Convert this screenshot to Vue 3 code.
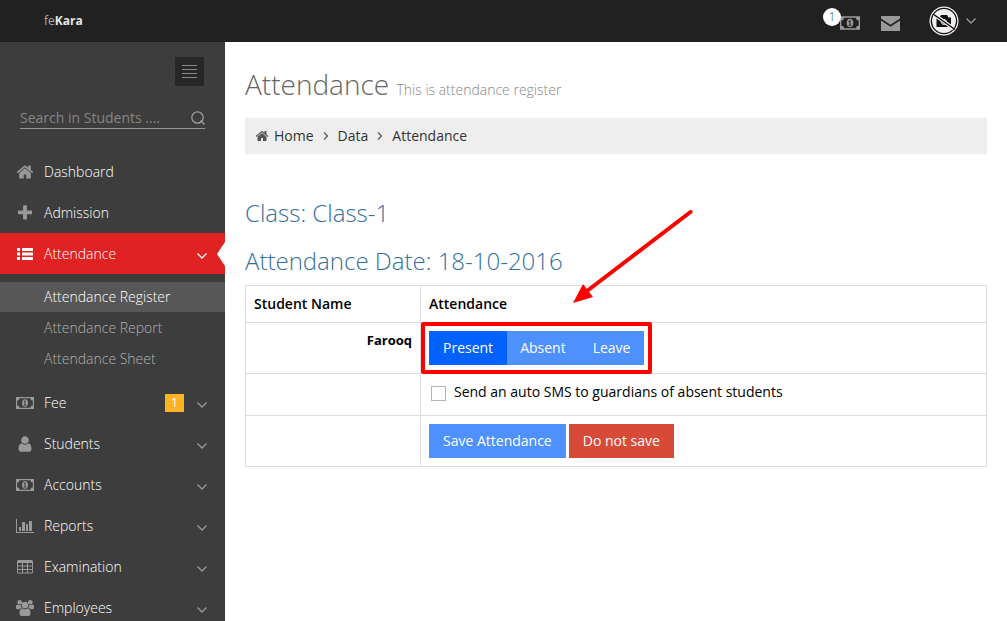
<script setup>
import { ref } from 'vue'

const search = ref('')
const status = ref('Present')
const statuses = ['Present', 'Absent', 'Leave']
const sendSms = ref(false)

const subItems = ['Attendance Register', 'Attendance Report', 'Attendance Sheet']
const items = [
  { label: 'Dashboard', icon: 'home' },
  { label: 'Admission', icon: 'plus' },
  { label: 'Attendance', icon: 'list', arrow: true, active: true },
  { label: 'Fee', icon: 'money', arrow: true, badge: '1' },
  { label: 'Students', icon: 'user', arrow: true },
  { label: 'Accounts', icon: 'money', arrow: true },
  { label: 'Reports', icon: 'chart', arrow: true },
  { label: 'Examination', icon: 'table', arrow: true },
  { label: 'Employees', icon: 'users', arrow: true }
]
</script>

<template>
  <svg class="defs" aria-hidden="true">
    <symbol id="home" viewBox="0 0 1792 1792">
      <path d="M1472 992v480q0 26-19 45t-45 19h-384v-384h-256v384h-384q-26 0-45-19t-19-45v-480q0-1 .5-3t.5-3l575-474 575 474q1 2 1 6zm223-69l-62 74q-8 9-21 11h-3q-13 0-21-7l-692-577-692 577q-12 8-24 7-13-2-21-11l-62-74q-8-10-7-23.5t11-21.5l719-599q32-26 76-26t76 26l244 204v-195q0-14 9-23t23-9h192q14 0 23 9t9 23v408l219 182q10 8 11 21.5t-7 23.5z" />
    </symbol>
    <symbol id="plus" viewBox="0 0 1792 1792">
      <path d="M1600 736v192q0 40-28 68t-68 28h-416v416q0 40-28 68t-68 28h-192q-40 0-68-28t-28-68v-416h-416q-40 0-68-28t-28-68v-192q0-40 28-68t68-28h416v-416q0-40 28-68t68-28h192q40 0 68 28t28 68v416h416q40 0 68 28t28 68z" />
    </symbol>
    <symbol id="list" viewBox="0 0 18 18">
      <path d="M1 3h3v3H1zM6 3h11v3H6zM1 7.500h3v3H1zM6 7.500h11v3H6zM1 12h3v3H1zM6 12h11v3H6z" />
    </symbol>
    <symbol id="money" viewBox="0 0 18 18">
      <path fill-rule="evenodd" d="M0 3h18v12H0zM3.600 4.200A2.400 2.400 0 0 1 1.200 6.600v4.800a2.400 2.400 0 0 1 2.400 2.400h10.800a2.400 2.400 0 0 1 2.400-2.400V6.600a2.400 2.400 0 0 1-2.400-2.400z" />
      <path fill-rule="evenodd" d="M9 5.200c2 0 3 1.800 3 3.800s-1 3.800-3 3.800-3-1.800-3-3.800 1-3.800 3-3.800zM8.700 6.600L7.500 7.700l.6.6.5-.4v2.600h-.9v.9h2.600v-.9h-.8V6.600z" />
    </symbol>
    <symbol id="user" viewBox="0 0 1792 1792">
      <path d="M1536 1399q0 109-62.500 187t-150.500 78h-854q-88 0-150.500-78t-62.500-187q0-85 8.500-160.500t31.500-152 58.500-131 94-89 134.500-34.500q131 128 313 128t313-128q76 0 134.500 34.500t94 89 58.500 131 31.500 152 8.500 160.500zm-256-887q0 159-112.500 271.500t-271.500 112.500-271.500-112.500-112.500-271.500 112.500-271.500 271.500-112.500 271.500 112.500 112.500 271.500z" />
    </symbol>
    <symbol id="chart" viewBox="0 0 18 18">
      <path d="M0 2h1v13h17v1H0zM3 10h2v4H3zM6 5h3v9H6zM10 7h2v7h-2zM13 4h3v10h-3z" />
    </symbol>
    <symbol id="table" viewBox="0 0 18 18">
      <path fill-rule="evenodd" d="M2.500 2h13Q17 2 17 3.500V14q0 1.500-1.500 1.500h-13Q1 15.500 1 14V3.500Q1 2 2.500 2zM2 5v2.500h4V5zM7 5v2.500h4V5zM12 5v2.500h4V5zM2 8.500V11h4V8.500zM7 8.500V11h4V8.500zM12 8.500V11h4V8.500zM2 12v2.500h4V12zM7 12v2.500h4V12zM12 12v2.500h4V12z" />
    </symbol>
    <symbol id="users" viewBox="0 0 18 18">
      <circle cx="3.700" cy="3.300" r="2.300" />
      <circle cx="14.300" cy="3.300" r="2.300" />
      <circle cx="9" cy="6" r="3.300" />
      <path d="M0 9V7.500Q0 5.500 1.500 5.500q2 1.200 3.500.6-.2 1.900.9 3-1.600 0-2.500 1.100H1.500Q0 10.200 0 9zM18 9V7.500q0-2-1.500-2-2 1.200-3.500.6.200 1.900-.9 3 1.600 0 2.500 1.100h1.900q1.500 0 1.500-1.200zM3.500 14.500q0-5 2.800-5.200Q9 11.400 11.700 9.300q2.800.2 2.800 5.200 0 2.500-2.200 2.500H5.700q-2.200 0-2.200-2.500z" />
    </symbol>
    <symbol id="down" viewBox="0 0 12 12">
      <path d="M1.500 3.500L6 8l4.500-4.500" fill="none" stroke="currentColor" stroke-width="1.300" />
    </symbol>
    <symbol id="right" viewBox="0 0 12 12">
      <path d="M4 2.500L7.500 6 4 9.500" fill="none" stroke="currentColor" stroke-width="1.200" />
    </symbol>
  </svg>

  <div class="page">
    <header class="topbar">
      <a href="#" class="logo">fe<b>Kara</b></a>
      <nav class="tools" aria-label="Account">
        <a href="#" class="tool" aria-label="Fees">
          <svg class="cash"><use href="#money" /></svg>
          <span class="count">1</span>
        </a>
        <a href="#" class="tool" aria-label="Messages">
          <svg class="mail" viewBox="0 0 19 15">
            <path d="M0 0h19v2.500L9.500 8.800 0 2.500zM0 4.500l9.500 6.300L19 4.500V15H0z" />
          </svg>
        </a>
        <button type="button" class="profile" aria-label="Profile">
          <svg class="avatar" viewBox="0 0 30 30">
            <circle cx="15" cy="15" r="14.500" fill="#eee" />
            <circle cx="15" cy="15" r="12.600" fill="#f4f0f0" stroke="#111" stroke-width="1.300" />
            <path d="M7.500 11.500h3l1.500-2.500h6l1.500 2.500H22v9.500H7.500z" fill="#111" />
            <circle cx="15" cy="16" r="2.600" fill="#333" stroke="#ccc" />
            <path d="M5 8.500L24.500 22.500" stroke="#f4f0f0" stroke-width="3.600" />
            <path d="M4 8L26 23.500" stroke="#111" stroke-width="1.500" />
          </svg>
          <svg class="chev"><use href="#down" /></svg>
        </button>
      </nav>
    </header>

    <div class="body">
      <aside class="sidebar">
        <button type="button" class="toggler" aria-label="Toggle menu">
          <svg viewBox="0 0 15 13"><path d="M0 .5h15M0 4.500h15M0 8.500h15M0 12.500h15" stroke="#8a8a8a" /></svg>
        </button>
        <form class="search" @submit.prevent>
          <input v-model="search" type="text" placeholder="Search in Students ...." aria-label="Search in Students" />
          <button type="submit" aria-label="Search">
            <svg viewBox="0 0 14 14" stroke="#a0a0a0" stroke-width="1.200">
              <circle cx="6.500" cy="6.500" r="5.700" /><path d="M9.500 9.500l4 4" />
            </svg>
          </button>
        </form>
        <ul class="menu">
          <li v-for="item in items" :key="item.label">
            <a href="#" class="item" :class="{ active: item.active }">
              <svg class="ico"><use :href="'#' + item.icon" /></svg>
              <span class="label">{{ item.label }}</span>
              <span v-if="item.badge" class="badge">{{ item.badge }}</span>
              <svg v-if="item.arrow" class="chev"><use href="#down" /></svg>
            </a>
            <ul v-if="item.active" class="sub">
              <li v-for="(s, i) in subItems" :key="s">
                <a href="#" :class="{ current: i === 0 }">{{ s }}</a>
              </li>
            </ul>
          </li>
        </ul>
      </aside>

      <main class="content">
        <h1>Attendance <small>This is attendance register</small></h1>
        <nav class="crumbs" aria-label="Breadcrumb">
          <svg class="house"><use href="#home" /></svg>
          <a href="#">Home</a>
          <svg class="sep"><use href="#right" /></svg>
          <a href="#">Data</a>
          <svg class="sep"><use href="#right" /></svg>
          <a href="#">Attendance</a>
        </nav>
        <h2>Class: Class-1</h2>
        <h2>Attendance Date: 18-10-2016</h2>
        <table>
          <thead>
            <tr><th scope="col" class="name">Student Name</th><th scope="col">Attendance</th></tr>
          </thead>
          <tbody>
            <tr>
              <th scope="row" class="student">Farooq</th>
              <td>
                <div class="group">
                  <button
                    v-for="s in statuses"
                    :key="s"
                    type="button"
                    class="btn blue"
                    :class="{ on: status === s }"
                    :aria-pressed="status === s"
                    @click="status = s"
                  >{{ s }}</button>
                  <span class="frame"></span>
                  <svg class="arrow" viewBox="0 0 120 94">
                    <path d="M117.500 2L14 81" stroke="#f00" stroke-width="4" stroke-linecap="round" />
                    <path d="M0 93L10 74l10 13z" fill="#f00" />
                  </svg>
                </div>
              </td>
            </tr>
            <tr>
              <td></td>
              <td class="sms">
                <label><input v-model="sendSms" type="checkbox" />Send an auto SMS to guardians of absent students</label>
              </td>
            </tr>
            <tr>
              <td></td>
              <td>
                <div class="actions">
                  <button type="button" class="btn blue">Save Attendance</button>
                  <button type="button" class="btn red">Do not save</button>
                </div>
              </td>
            </tr>
          </tbody>
        </table>
      </main>
    </div>
  </div>
</template>

<style>
body {
  margin: 0;
  background: #fff;
}
</style>

<style scoped>
.defs {
  position: absolute;
  width: 0;
  height: 0;
}
.page {
  display: flex;
  flex-direction: column;
  height: 100vh;
  overflow: hidden;
  font: 14px/20px "Open Sans", sans-serif;
  color: #000;
}
.page * {
  box-sizing: border-box;
}
a {
  color: inherit;
  text-decoration: none;
}
button {
  font: inherit;
  border: 0;
  padding: 0;
  background: none;
  cursor: pointer;
}
ul {
  list-style: none;
  margin: 0;
  padding: 0;
}
svg {
  display: block;
  fill: currentColor;
  flex: none;
}
.topbar {
  display: flex;
  justify-content: space-between;
  align-items: center;
  flex: none;
  height: 42px;
  padding: 0 30px 0 44px;
  background: #212121;
  color: #999;
}
.logo {
  font-size: 12px;
  color: #aaa;
}
.logo b {
  color: #e6e6e6;
}
.tools {
  display: flex;
  align-items: center;
}
.tool {
  position: relative;
  margin-right: 21px;
  padding-top: 4px;
}
.tool + .profile {
  margin-left: 8px;
}
.cash {
  width: 20px;
  height: 20px;
}
.mail {
  width: 19px;
  height: 15px;
}
.count {
  position: absolute;
  left: -17px;
  top: -1px;
  width: 18px;
  height: 18px;
  border-radius: 9px;
  background: #fff;
  color: #6b96d2;
  font-size: 12px;
  line-height: 18px;
  text-align: center;
}
.profile {
  display: flex;
  align-items: center;
  gap: 6px;
  color: #999;
}
.avatar {
  width: 30px;
  height: 30px;
}
.chev {
  width: 12px;
  height: 12px;
}
.body {
  display: flex;
  flex: 1;
  min-height: 0;
}
.sidebar {
  display: flex;
  flex-direction: column;
  flex: none;
  width: 225px;
  overflow: hidden;
  background: #3d3d3d;
}
.toggler {
  display: flex;
  align-items: center;
  justify-content: center;
  align-self: flex-end;
  flex: none;
  width: 29px;
  height: 29px;
  margin: 15px 21px 0 0;
  background: #272727;
}
.toggler svg {
  width: 15px;
  height: 13px;
}
.search {
  display: flex;
  align-items: center;
  flex: none;
  height: 22px;
  margin: 21px 20px 22px;
  border-bottom: 1px solid #959595;
}
.search input {
  flex: 1;
  min-width: 0;
  padding: 0;
  border: 0;
  outline: 0;
  background: none;
  color: #ccc;
  font: 14px/20px "Open Sans", sans-serif;
}
.search input::placeholder {
  color: #858585;
  opacity: 1;
}
.search svg {
  width: 14px;
  height: 14px;
  fill: none;
}
.item {
  position: relative;
  display: flex;
  align-items: center;
  height: 41px;
  padding: 0 17px 0 16px;
  color: #999;
}
.ico {
  width: 18px;
  height: 18px;
  margin-right: 10px;
}
.label {
  flex: 1;
  color: #fff;
  font-weight: 300;
}
.item .chev {
  margin-top: 4px;
}
.badge {
  width: 19px;
  height: 18px;
  margin-right: 12px;
  background: #fcb322;
  color: #fff;
  font-size: 12px;
  line-height: 18px;
  text-align: center;
}
.active {
  background: #e02222;
  color: #fff;
}
.active::after {
  content: "";
  position: absolute;
  right: 0;
  top: 9px;
  border: solid transparent;
  border-width: 12px 8px 12px 0;
  border-right-color: #fff;
}
.sub {
  display: flex;
  flex-direction: column;
  gap: 1px;
  padding: 8px 0;
}
.sub a {
  display: block;
  padding: 5px 0 5px 44px;
  color: #b0b0b0;
  font-weight: 300;
}
.sub .current {
  background: #575757;
  color: #fff;
}
.content {
  flex: 1;
  min-width: 0;
  padding: 24px 20px;
}
h1 {
  margin: 0 0 16px;
  color: #666;
  font-size: 28px;
  font-weight: 300;
  line-height: 36px;
}
h1 small {
  color: #888;
  font-size: 14px;
  line-height: 20px;
}
.crumbs {
  display: flex;
  align-items: center;
  height: 36px;
  margin-bottom: 45px;
  padding: 0 10px;
  background: #eee;
  color: #333;
}
.house {
  width: 14px;
  height: 14px;
  margin-right: 5px;
  color: #555;
}
.sep {
  width: 12px;
  height: 12px;
  margin: 0 6px;
  color: #555;
}
h2 {
  margin: 0 0 20px;
  color: #35709d;
  font-size: 24px;
  font-weight: 300;
  line-height: 28px;
}
h2 + table {
  margin-top: -10px;
}
table {
  width: 100%;
  border-collapse: collapse;
}
th,
td {
  padding: 8px;
  border: 1px solid #ddd;
  text-align: left;
  vertical-align: top;
}
th {
  font-weight: 600;
}
.name {
  width: 175px;
}
.student {
  font-size: 13px;
  font-weight: 700;
  line-height: 18px;
  text-align: right;
}
.group {
  position: relative;
  display: flex;
  width: max-content;
}
.actions {
  display: flex;
  gap: 3px;
}
.btn {
  padding: 7px 14px;
  color: #fff;
}
.group .btn:nth-child(2) {
  padding: 7px 13px;
}
.blue {
  background: #4d90fe;
}
.blue.on {
  background: #0362fd;
}
.red {
  background: #d84a38;
}
.frame {
  position: absolute;
  inset: -9px -8px;
  border: 4px solid #f00;
  border-radius: 2px;
  pointer-events: none;
}
.arrow {
  position: absolute;
  left: 144px;
  top: -121px;
  width: 120px;
  height: 94px;
  pointer-events: none;
}
.sms label {
  display: flex;
  align-items: center;
  height: 25px;
  padding-bottom: 5px;
}
.sms input {
  appearance: none;
  width: 15px;
  height: 15px;
  margin: 2px 8px 0 2px;
  border: 1px solid #b5b5b5;
  background: #fff;
}
.sms input:checked {
  background: #4d90fe;
}
</style>
